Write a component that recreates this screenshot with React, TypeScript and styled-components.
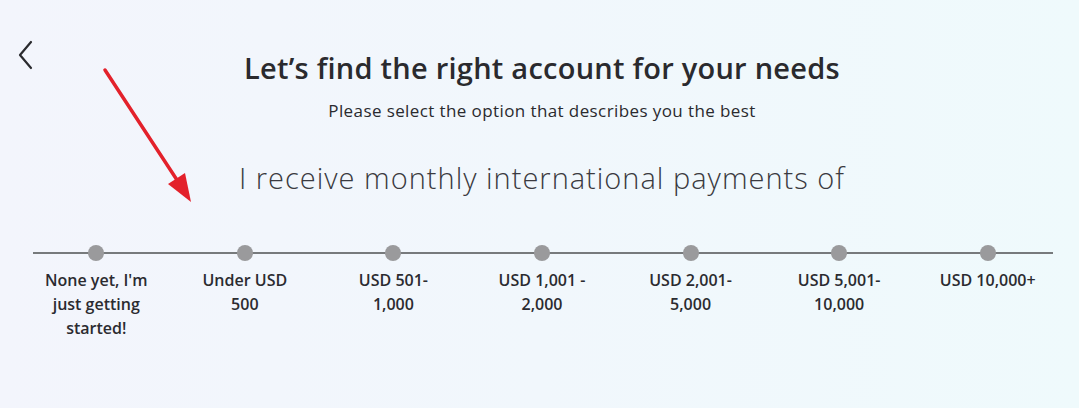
import React from "react";
import styled, { createGlobalStyle } from "styled-components";

const Global = createGlobalStyle`
  html, body { margin: 0; padding: 0; }
  body {
    font-family: "Open Sans", "Noto Sans", sans-serif;
    color: #2b2b30;
  }
`;

const Page = styled.div`
  position: relative;
  width: 1079px;
  height: 408px;
  overflow: hidden;
  background: linear-gradient(90deg, #f3f5fc 0%, #f1f7fc 50%, #effafc 100%);
  box-sizing: border-box;
  padding: 0 17px 0 22px;
  display: flex;
  flex-direction: column;
  align-items: center;
`;

const BackButton = styled.button`
  position: absolute;
  left: 12px;
  top: 38px;
  width: 28px;
  height: 34px;
  padding: 0;
  border: none;
  background: none;
  display: flex;
  align-items: center;
  justify-content: center;
  cursor: pointer;
`;

const Title = styled.h1`
  margin: 51px 0 0;
  font-size: 29px;
  font-weight: 600;
  line-height: 34px;
  letter-spacing: 0.25px;
  color: #2a2a2e;
  white-space: nowrap;
`;

const Subtitle = styled.p`
  margin: 15px 0 0;
  font-size: 17px;
  font-weight: 400;
  line-height: 22px;
  letter-spacing: 0.4px;
  color: #2a2a2e;
  white-space: nowrap;
`;

const Question = styled.h2`
  margin: 37px 0 0;
  font-size: 29px;
  font-weight: 300;
  line-height: 38px;
  letter-spacing: 1px;
  color: #3a3a40;
  white-space: nowrap;
`;

const Track = styled.div`
  position: relative;
  width: 100%;
  margin-top: 48px;
  display: grid;
  grid-template-columns: repeat(7, 1fr);
`;

const Line = styled.div`
  position: absolute;
  left: 11px;
  right: 9px;
  top: 7px;
  height: 2px;
  background: #777a7c;
`;

const Option = styled.div`
  position: relative;
  display: flex;
  flex-direction: column;
  align-items: center;
  cursor: pointer;
`;

const Dot = styled.span`
  width: 16px;
  height: 16px;
  border-radius: 50%;
  background: #9a9a9c;
`;

const Label = styled.span`
  margin-top: 7px;
  width: 104px;
  text-align: center;
  font-size: 16px;
  font-weight: 600;
  line-height: 24px;
  color: #2b2b30;
`;

const Annotation = styled.svg`
  position: absolute;
  left: 95px;
  top: 62px;
  pointer-events: none;
`;

const options = [
  "None yet, I'm just getting started!",
  "Under USD 500",
  "USD 501-1,000",
  "USD 1,001 - 2,000",
  "USD 2,001-5,000",
  "USD 5,001-10,000",
  "USD 10,000+",
];

export default function App() {
  return (
    <>
      <Global />
      <Page>
        <BackButton aria-label="Back">
          <svg width="20" height="30" viewBox="0 0 20 30" fill="none">
            <path d="M15 2 L4 15 L15 28" stroke="#2a2a2e" strokeWidth="2.2" strokeLinecap="round" strokeLinejoin="round" />
          </svg>
        </BackButton>
        <Title>Let’s find the right account for your needs</Title>
        <Subtitle>Please select the option that describes you the best</Subtitle>
        <Question>I receive monthly international payments of</Question>
        <Track>
          <Line />
          {options.map((o) => (
            <Option key={o}>
              <Dot />
              <Label>{o}</Label>
            </Option>
          ))}
        </Track>
        <Annotation width="110" height="150" viewBox="0 0 110 150">
          <line x1="10" y1="8" x2="82" y2="118" stroke="#e3212b" strokeWidth="3.5" strokeLinecap="round" />
          <polygon points="96,140 73,122 90,111" fill="#e3212b" />
        </Annotation>
      </Page>
    </>
  );
}
